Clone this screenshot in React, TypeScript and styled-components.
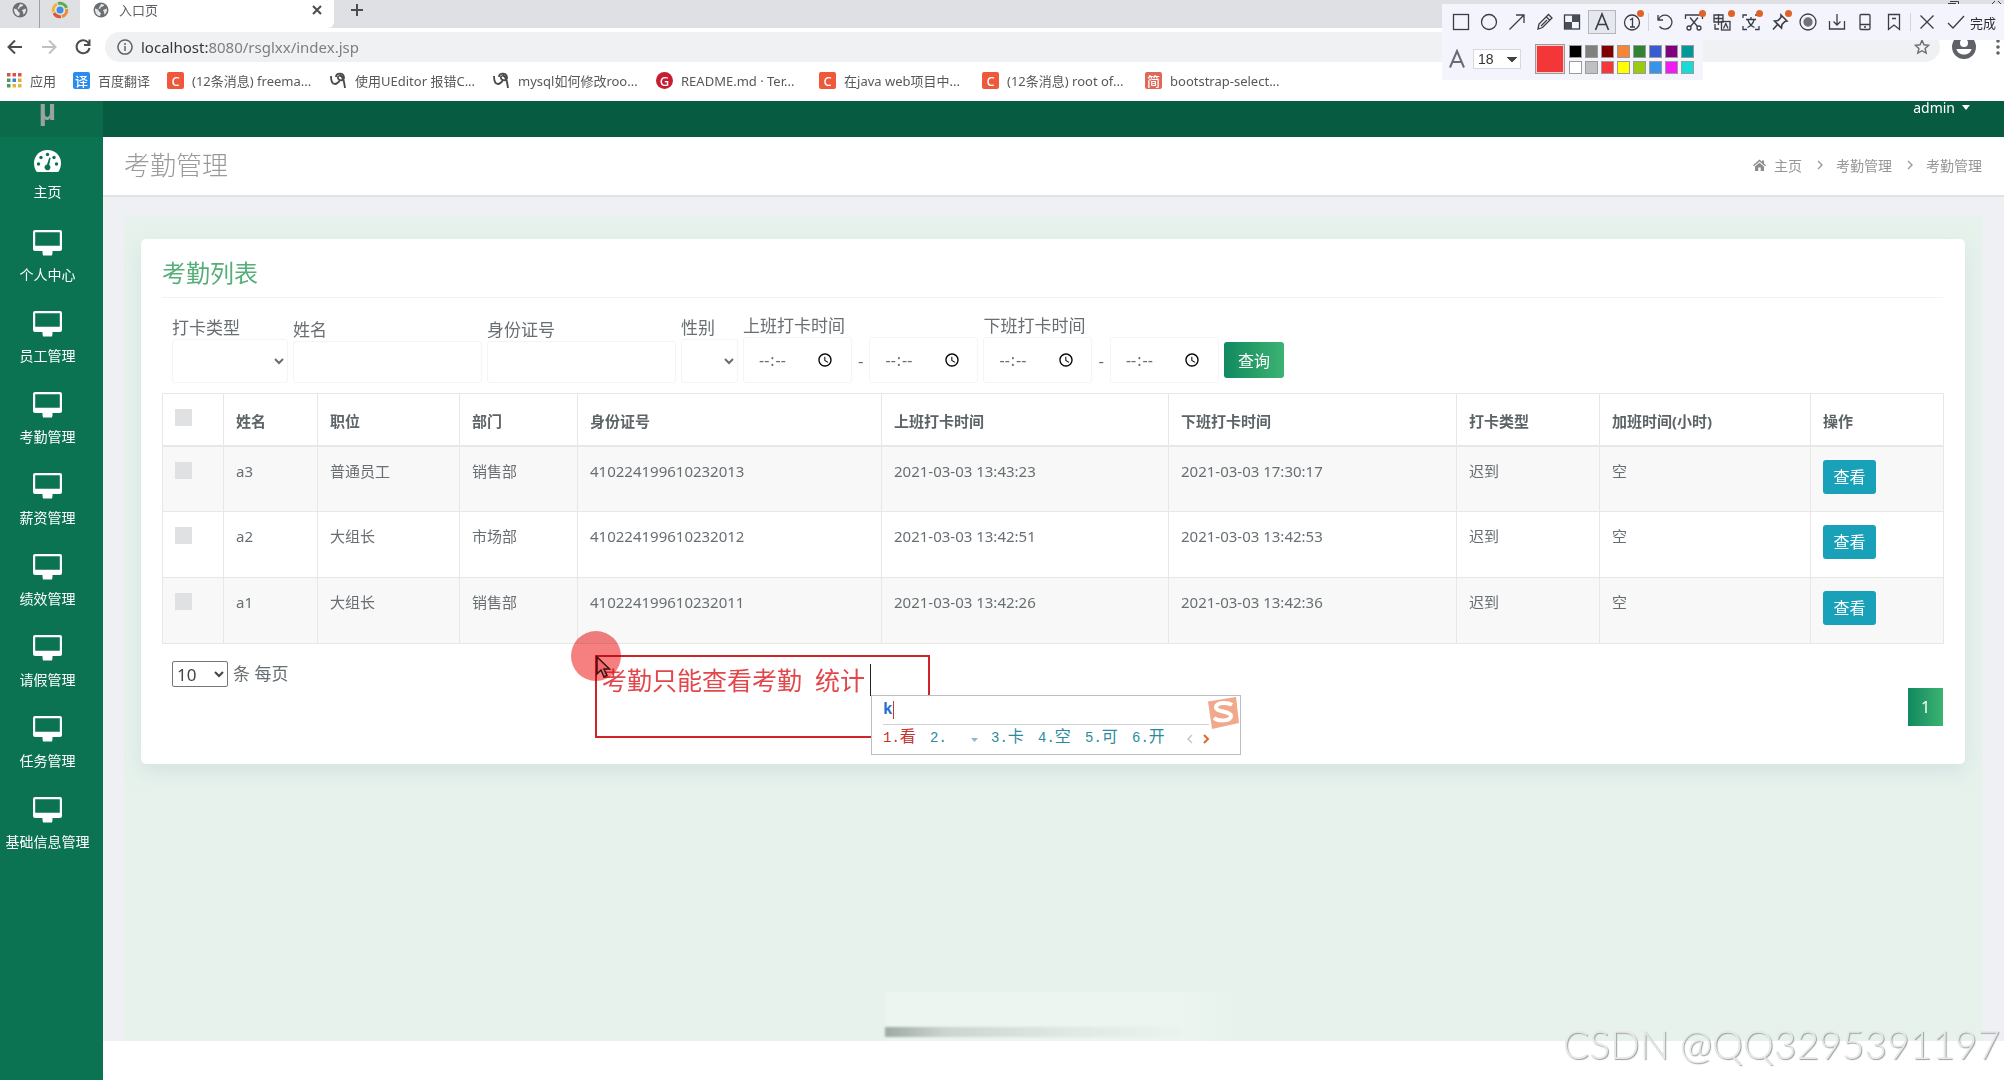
import React from "react";
import styled, { createGlobalStyle, css } from "styled-components";

const GlobalStyle = createGlobalStyle`
  *, *::before, *::after { box-sizing: border-box; }
  body {
    margin: 0;
    background: #fff;
    color: #686f73;
    font-family: "Noto Sans", "Noto Sans CJK SC", sans-serif;
    font-size: 15px;
  }
  button, input, select { font: inherit; color: inherit; }
  a { color: inherit; text-decoration: none; }
`;

const Screen = styled.div`
  position: relative;
  min-height: 100vh;
  display: flex;
  flex-direction: column;
  overflow: hidden;
`;

/* ---------- browser chrome ---------- */

const TabStrip = styled.div`
  display: flex;
  align-items: stretch;
  height: 28px;
  background: #dee0e4;
`;

const PinnedTab = styled.div`
  display: flex;
  align-items: center;
  justify-content: center;
  width: 40px;
  padding-bottom: 8px;
  &:first-child { border-right: 1px solid #9da0a4; }
`;

const ActiveTab = styled.div`
  display: flex;
  align-items: center;
  gap: 10px;
  width: 254px;
  padding: 0 11px 8px 13px;
  background: #fff;
  border-radius: 0 0 6px 0;
  color: #5b5e62;
  font-size: 13px;
  line-height: 20px;
`;

const TabTitle = styled.span`
  flex: 1;
`;

const PlainButton = styled.button`
  display: flex;
  align-items: center;
  justify-content: center;
  padding: 0;
  border: 0;
  background: none;
`;

const NewTabButton = styled(PlainButton)`
  width: 46px;
  padding-bottom: 8px;
`;

const WindowControls = styled.div`
  display: flex;
  gap: 32px;
  margin-left: auto;
  padding-right: 2px;
`;

const AddressRow = styled.div`
  display: flex;
  align-items: center;
  height: 38px;
  padding-bottom: 1px;
  background: #fff;
`;

const NavButtons = styled.div`
  display: flex;
  gap: 14px;
  padding: 0 12px 0 5px;
`;

const NavButton = styled(PlainButton)`
  width: 20px;
  height: 20px;
`;

const UrlPill = styled.div`
  flex: 1;
  display: flex;
  align-items: center;
  gap: 8px;
  height: 30px;
  padding: 0 10px 0 12px;
  border-radius: 15px;
  background: #eff1f3;
  color: #7b7f83;
  font-size: 15px;
`;

const UrlText = styled.span`
  flex: 1;
  b { font-weight: 400; color: #35383b; }
`;

const BrowserMenu = styled.div`
  display: flex;
  align-items: center;
  gap: 20px;
  width: 64px;
  padding-left: 12px;
`;

const BookmarkBar = styled.nav`
  display: flex;
  align-items: center;
  gap: 17px;
  height: 35px;
  padding: 0 7px 6px;
  background: #fff;
  color: #55585c;
  font-size: 13px;
`;

const BookmarkLink = styled.a<{ $wide?: boolean }>`
  display: flex;
  align-items: center;
  gap: 8px;
  line-height: 18px;
  white-space: nowrap;
  ${(p) => p.$wide && css`width: 146px;`}
`;

const BookmarkBadge = styled.span<{ $bg: string; $round?: boolean }>`
  flex: none;
  display: flex;
  align-items: center;
  justify-content: center;
  width: 17px;
  height: 17px;
  border-radius: ${(p) => (p.$round ? "50%" : "2px")};
  background: ${(p) => p.$bg};
  color: #fff;
  font-size: 13px;
  font-weight: 500;
`;

/* ---------- application shell ---------- */

const AppShell = styled.div`
  flex: 1;
  display: flex;
`;

const Sidebar = styled.aside`
  flex: none;
  width: 103px;
  padding-right: 8px;
  background: #0c7352;
`;

const Brand = styled.div`
  height: 36px;
  margin-right: -8px;
  padding-right: 8px;
  background: #0a6a4a;
  color: #9aa39d;
  font-family: "Liberation Sans", sans-serif;
  font-size: 30px;
  font-weight: 700;
  line-height: 18px;
  text-align: center;
`;

const Menu = styled.ul`
  margin: 0;
  padding: 0;
  list-style: none;
`;

const MenuItem = styled.li`
  height: 81px;
`;

const MenuLink = styled.a`
  display: flex;
  flex-direction: column;
  align-items: center;
  gap: 9px;
  padding-top: 12px;
  color: #fff;
  font-size: 14px;
  line-height: 20px;
  white-space: nowrap;
  svg { display: block; }
`;

const Content = styled.div`
  flex: 1;
  display: flex;
  flex-direction: column;
  min-width: 0;
`;

const TopBar = styled.header`
  display: flex;
  justify-content: flex-end;
  height: 36px;
  padding: 0 34px;
  background: #075b41;
`;

const UserMenu = styled(PlainButton)`
  gap: 7px;
  height: 13px;
  color: #fff;
  font-size: 14px;
`;

const TitleBar = styled.div`
  display: flex;
  align-items: center;
  justify-content: space-between;
  height: 58px;
  padding: 0 22px 2px 21px;
  background: #fff;
`;

const PageTitle = styled.h1`
  margin: 0;
  color: #9a9a9a;
  font-size: 26px;
  font-weight: 300;
  line-height: 36px;
`;

const Breadcrumb = styled.nav`
  display: flex;
  align-items: center;
  gap: 12px;
  color: #969696;
  font-size: 14px;
  a { display: flex; align-items: center; gap: 8px; }
`;

const Main = styled.main`
  flex: 1;
  display: flex;
  flex-direction: column;
  padding: 19px 22px 0 21px;
  border-top: 2px solid #e1e2e4;
  background: #eff0f3;
`;

const Panel = styled.section`
  flex: 1;
  padding: 23px 17px;
  background: #e7f2ec;
`;

const Footer = styled.footer`
  height: 39px;
  background: #fff;
`;

const Card = styled.div`
  padding: 20px 22px 38px 21px;
  border-radius: 5px;
  background: #fff;
  box-shadow: 0 8px 20px rgba(160, 190, 200, 0.28);
`;

const CardTitle = styled.h2`
  margin: 0 0 17px;
  padding-bottom: 10px;
  border-bottom: 1px solid #f3f3f3;
  color: #56ae79;
  font-size: 24px;
  font-weight: 400;
  line-height: 28px;
`;

/* ---------- filters ---------- */

const FilterForm = styled.form`
  display: flex;
  align-items: flex-end;
  gap: 5px;
  padding-left: 10px;
`;

const Field = styled.div`
  display: flex;
  flex-direction: column;
  font-size: 17px;
  label { line-height: 22px; }
`;

const control = css`
  border: 1px solid #f3f4f4;
  border-radius: 3px;
  background: #fff;
`;

const FilterSelect = styled.select<{ $width: number }>`
  ${control}
  width: ${(p) => p.$width}px;
  height: 44px;
`;

const FilterInput = styled.input`
  ${control}
  width: 189px;
  height: 42px;
`;

const TimeRange = styled.div`
  display: flex;
  align-items: center;
  gap: 6px;
`;

const TimeInput = styled.input`
  ${control}
  width: 109px;
  height: 46px;
  padding: 0 14px;
  font-size: 16px;
  &::-webkit-datetime-edit-ampm-field { display: none; }
`;

const QueryButton = styled.button`
  width: 60px;
  height: 36px;
  margin-bottom: 5px;
  padding: 0;
  border: 0;
  border-radius: 3px;
  background: linear-gradient(90deg, #12895f, #3cb371);
  color: #fff;
  font-size: 16px;
`;

/* ---------- table ---------- */

const Table = styled.table`
  width: 100%;
  margin-top: 10px;
  border-collapse: collapse;
  table-layout: fixed;
  line-height: 24px;

  th, td {
    border: 1px solid #e6e8e8;
    padding: 12px;
    text-align: left;
    vertical-align: top;
  }
  th {
    height: 52px;
    padding: 15px 12px 11px;
    border-bottom-width: 2px;
    color: #5c6468;
    font-weight: 700;
  }
  td { height: 66px; }
  tbody tr:nth-child(odd) { background: #f8f8f8; }
`;

const Column = styled.col<{ $width: number }>`
  width: ${(p) => p.$width}px;
`;

const CheckCell = styled.td`
  && { padding-top: 15px; }
`;

const ActionCell = styled.td`
  && { padding-top: 13px; }
`;

const Tick = styled.input`
  appearance: none;
  display: block;
  width: 17px;
  height: 17px;
  margin: 0;
  background: #dfe1e3;
`;

const ViewButton = styled.button`
  display: block;
  width: 53px;
  height: 34px;
  padding: 0;
  border: 0;
  border-radius: 3px;
  background: #18a1b8;
  color: #fff;
  font-size: 16px;
`;

const TableFooter = styled.div`
  display: flex;
  justify-content: space-between;
  height: 65px;
  margin-top: 17px;
  padding-left: 10px;
`;

const PageSize = styled.label`
  display: flex;
  gap: 5px;
  font-size: 17px;
  line-height: 26px;
  select {
    width: 56px;
    height: 26px;
    border: 1px solid #767676;
    border-radius: 2px;
    background: #fff;
    color: #444;
  }
`;

const PageButton = styled.button`
  align-self: flex-end;
  width: 35px;
  height: 38px;
  padding: 0;
  border: 0;
  background: linear-gradient(90deg, #12895f, #3cb371);
  color: #fff;
  font-size: 16px;
`;

/* ---------- screen-capture toolbar ---------- */

const CaptureTool = styled.div`
  position: absolute;
  top: 4px;
  right: 0;
  width: 562px;
`;

const CaptureRow = styled.div`
  display: flex;
  align-items: center;
  height: 36px;
  padding-left: 5px;
  background: #f4f5fc;
`;

const ToolGroup = styled.div<{ $width: number }>`
  flex: none;
  display: flex;
  width: ${(p) => p.$width}px;
`;

const ToolButton = styled(PlainButton)<{ $active?: boolean }>`
  position: relative;
  flex: 1;
  height: 24px;
  ${(p) =>
    p.$active &&
    css`
      margin: 0 2px;
      background: #e6e8f0;
      box-shadow: inset 0 0 0 1px #b4b6bc;
    `}
`;

const NewDot = styled.i`
  position: absolute;
  top: 0;
  right: 2px;
  width: 7px;
  height: 7px;
  border-radius: 50%;
  background: #e0622a;
`;

const ToolDivider = styled.i`
  flex: none;
  width: 1px;
  height: 18px;
  margin: 0 2px;
  background: #d3d5dc;
`;

const DoneButton = styled(PlainButton)`
  gap: 5px;
  margin-left: 6px;
  color: #2c2d33;
  font-size: 13px;
  white-space: nowrap;
`;

const StyleRow = styled.div`
  display: flex;
  align-items: center;
  width: 261px;
  height: 40px;
  padding: 0 0 2px 5px;
  background: #f4f5fc;
  font-family: "Liberation Sans", sans-serif;
  color: #333;
`;

const SizeSelect = styled.select`
  appearance: none;
  width: 48px;
  height: 20px;
  margin: 0 14px 0 6px;
  padding: 0 4px;
  border: 1px solid #d7d9df;
  border-radius: 0;
  background:
    linear-gradient(to bottom left, #444 50%, transparent 50%) 33px 7px / 5px 6px no-repeat,
    linear-gradient(to bottom right, #444 50%, transparent 50%) 38px 7px / 5px 6px no-repeat,
    #fff;
  font-size: 14px;
`;

const CurrentColor = styled.span`
  width: 30px;
  height: 30px;
  margin-right: 4px;
  border: 1px solid #9b9b9b;
  background: #f33638;
  box-shadow: inset 0 0 0 1px #f4cfd0;
`;

const Palette = styled.div`
  display: grid;
  grid-template-columns: repeat(8, 13px);
  gap: 3px;
`;

const Swatch = styled.button<{ $color: string }>`
  height: 13px;
  padding: 0;
  border: 1px solid #9b9b9b;
  background: ${(p) => p.$color};
`;

/* ---------- annotation and input method ---------- */

const Annotation = styled.div`
  position: absolute;
  top: 655px;
  left: 595px;
  width: 335px;
  height: 83px;
  padding: 7px 5px;
  border: 2px solid #cf2429;
  color: #e2474b;
  font-size: 25px;
  line-height: 32px;
  white-space: pre;
`;

const AnnotationText = styled.span`
  display: inline-block;
  padding-right: 5px;
  border-right: 1px solid #222;
`;

const ClickHalo = styled.div`
  position: absolute;
  top: 631px;
  left: 571px;
  width: 50px;
  height: 50px;
  border-radius: 50%;
  background: #f67f80;
  mix-blend-mode: multiply;
`;

const Pointer = styled.svg`
  position: absolute;
  top: 656px;
  left: 596px;
`;

const ImeWindow = styled.div`
  position: absolute;
  top: 695px;
  left: 871px;
  width: 370px;
  height: 60px;
  padding-left: 11px;
  border: 1px solid #bcbfc2;
  background: #fff;
  color: #2c8a9f;
  font-family: "Liberation Mono", "Noto Sans CJK SC", monospace;
  font-size: 14px;
`;

const Composition = styled.div`
  width: 326px;
  height: 29px;
  border-bottom: 1px solid #cfd2d5;
  line-height: 29px;
  b { color: #1f6fd0; font-size: 16px; border-right: 1px solid #c33; }
`;

const Candidates = styled.ol`
  display: flex;
  align-items: baseline;
  height: 28px;
  margin: 0;
  padding: 0;
  list-style: none;
  line-height: 26px;
`;

const Candidate = styled.li<{ $first?: boolean }>`
  width: 47px;
  white-space: nowrap;
  ${(p) => p.$first && css`color: #c8302c;`}
  span { font-size: 16px; }
`;

const WideCandidate = styled(Candidate)`
  width: 61px;
  svg { margin-left: 24px; }
`;

const Arrows = styled.li`
  display: flex;
  gap: 6px;
  align-self: center;
  padding-left: 7px;
`;

const ImeLogo = styled.svg`
  position: absolute;
  top: 0;
  right: 0;
`;

const Watermark = styled.div`
  position: absolute;
  right: 4px;
  bottom: 10px;
  color: #e6e9e8;
  font-family: Lato, "Liberation Sans", sans-serif;
  font-size: 39px;
  font-weight: 300;
  line-height: 52px;
  text-shadow: 1px 1px 1px #9a9f9d;
  white-space: nowrap;
`;

const PlayerShade = styled.div`
  position: absolute;
  left: 885px;
  bottom: 4px;
  width: 370px;
  height: 84px;
  padding-top: 35px;
  background: linear-gradient(90deg, rgba(255, 255, 255, 0.2) 80%, transparent);
  &::before {
    content: "";
    display: block;
    width: 300px;
    height: 10px;
    background: linear-gradient(90deg, #9eaaa3, #ccd5cf 20%, #dfe8e2 60%, transparent);
    filter: blur(1px);
  }
`;

/* ---------- drawings ---------- */

const Globe = () => (
  <svg width="16" height="16" viewBox="0 0 16 16">
    <circle cx="8" cy="8" r="7.500" fill="#6b6f74" />
    <path d="M2 6.500l3 1 1.500 2.500 1.500 1-1 3C3.500 13.500 1.800 10.500 2 6.500zM8 2l3.500.8L10 4.500 8 5 7 7 5.500 6.500 7 4zM10 8l3.800-1.500c.6 2.500-.6 5-2.300 6.200L11 10z" fill="#e4e6e8" />
  </svg>
);

const Swirl = () => (
  <svg width="18" height="18" viewBox="0 0 18 18" fill="none" strokeWidth="3">
    <path d="M2.500 11A6.800 6.800 0 0 1 6 3" stroke="#f2b233" />
    <path d="M7 2.500A6.800 6.800 0 0 1 15.500 7" stroke="#5cae4c" />
    <path d="M15.700 8A6.800 6.800 0 0 1 11 15.500" stroke="#f08a35" />
    <path d="M10 15.700A6.800 6.800 0 0 1 3 12" stroke="#e2553a" />
    <circle cx="9" cy="9" r="3.500" fill="#3d8fe0" />
  </svg>
);

const Stroke = ({ d, color = "#4a4d51", size = 18, width = 2, box = 18 }: { d: string; color?: string; size?: number; width?: number; box?: number }) => (
  <svg width={size} height={size} viewBox={`0 0 ${box} ${box}`} fill="none" stroke={color} strokeWidth={width}>
    <path d={d} />
  </svg>
);

const AppsGrid = () => (
  <svg width="15" height="15" viewBox="0 0 15 15">
    {["#d9534a", "#d9534a", "#d9534a", "#4a9e5c", "#3f7fd6", "#e0a93a", "#4a9e5c", "#e0b93a", "#e0b93a"].map((c, i) => (
      <rect key={i} x={(i % 3) * 5.5} y={Math.floor(i / 3) * 5.5} width="3.500" height="3.500" fill={c} />
    ))}
  </svg>
);

const Quill = () => (
  <svg width="17" height="17" viewBox="0 0 17 17" fill="none" stroke="#4b4b4b" strokeWidth="1.800">
    <path d="M1 4c0 5 1.500 8 4 8 2 0 3.500-1.500 5-4M6 5c0-4 6-4.500 7.500-1.500S13 9 10 8 7 4.500 10 3.500c3 .5 4 5 5 12.500" />
  </svg>
);

const Gauge = () => (
  <svg width="29" height="24" viewBox="0 0 29 24">
    <path d="M14.500 1C6.800 1 1 6.800 1 14c0 3 .8 5.600 2.200 8.200.3.500.7.800 1.300.8h20c.6 0 1-.3 1.300-.8C27.200 19.600 28 17 28 14 28 6.800 22.200 1 14.500 1z" fill="#fff" />
    <g fill="#0c7352">
      <circle cx="5.500" cy="15" r="1.700" />
      <circle cx="8" cy="8.500" r="1.700" />
      <circle cx="14.500" cy="5.500" r="1.700" />
      <circle cx="21" cy="8.500" r="1.700" />
      <circle cx="23.500" cy="15" r="1.700" />
      <path d="M16.300 8.500l1.300.4-1.400 7a3 3 0 1 1-2.200-.5z" />
    </g>
  </svg>
);

const Monitor = () => (
  <svg width="29" height="26" viewBox="0 0 29 26">
    <path fillRule="evenodd" fill="#fff" d="M2 0h25a2 2 0 0 1 2 2v17a2 2 0 0 1-2 2h-7.500v2l-.5 2.500h-9L9.500 23v-2H2a2 2 0 0 1-2-2V2a2 2 0 0 1 2-2zM2.200 2.200v13.600h24.600V2.200z" />
  </svg>
);

const HomeIcon = () => (
  <svg width="13" height="12" viewBox="0 0 13 12" fill="#8c8c8c">
    <path d="M6.500.5L0 6.200l.9 1L6.500 2.500l5.600 4.700.9-1-2-1.800V1.500H9v1.200zM6.500 3.700L2 7.500V12h3.300V8.500h2.400V12H11V7.500z" />
  </svg>
);

const captureStroke = { fill: "none", stroke: "#3b3d46", strokeWidth: 1.3 };
const ToolIcon = ({ children }: { children: React.ReactNode }) => (
  <svg width="20" height="20" viewBox="0 0 20 20" {...captureStroke}>{children}</svg>
);

const drawTools: { name: string; art: React.ReactNode; dot?: boolean; active?: boolean }[] = [
  { name: "矩形", art: <rect x="2.500" y="2.500" width="15" height="15" /> },
  { name: "椭圆", art: <circle cx="10" cy="10" r="7.500" /> },
  { name: "箭头", art: <path d="M2.500 17.500L17 3M9 3h8v8" /> },
  { name: "画笔", art: <path d="M3 17l1-5L13.500 2.500l3.500 3.500L7.500 15.500zM11.500 5l3.500 3.500M6 14l6-6" /> },
  { name: "马赛克", art: <><rect x="2.500" y="3" width="15" height="14" /><path d="M10 3h7v7h-7zM3 10h7v7H3z" fill="#4a4c57" stroke="none" /></> },
  { name: "文字", art: <path d="M3.500 18L10 2l6.500 16M6 12.500h8" strokeWidth="1.600" />, active: true },
  { name: "序号", art: <><circle cx="10" cy="10.500" r="7.500" /><path d="M8 8l2.500-1.500V15M8 15h5" /></>, dot: true },
];

const editTools: { name: string; art: React.ReactNode; dot?: boolean }[] = [
  { name: "撤销", art: <path d="M3 3v5h5M3.500 7.500a7 7 0 1 1 1 7" /> },
  { name: "剪裁", art: <><path d="M1.500 7V3h17v4M6 5.500l7.500 9M14 5.500L6.500 14.500" /><circle cx="5" cy="16" r="2" /><circle cx="15" cy="16" r="2" /></>, dot: true },
  { name: "翻译", art: <><path d="M2 3h9v7H2zM6.500 2v11M2 6.500h9M3 12v5h4" /><rect x="9.500" y="9.500" width="8.500" height="8.500" /><path d="M11.500 16.500l2.300-5 2.200 5" /></>, dot: true },
  { name: "识别文字", art: <path d="M2 6V3h4M14 3h4M2 14v3.500h4M14 17.500h4V14M5 7.500h10M10 5v2.500M13 8c-1 3.500-3 6-6.500 7.500M7 8c1 3.500 3 6 6.500 7.500" />, dot: true },
  { name: "钉住", art: <path d="M11 3l6 6-2 .5-3 3-.5 3.500-7-7 3.500-.5 3-3zM8 12l-5 5.500" strokeWidth="1.600" />, dot: true },
  { name: "录屏", art: <><circle cx="10" cy="10" r="8" /><circle cx="10" cy="10" r="4" fill="#70727c" stroke="#70727c" /></> },
  { name: "保存", art: <path d="M2.500 9v8h15V9M10 2v11M6.500 9.500L10 13l3.500-3.500" /> },
  { name: "发送到手机", art: <><rect x="5" y="2.500" width="10" height="15" rx="1" /><path d="M5 12.500h10M9 15h2" /></> },
  { name: "收藏", art: <path d="M4.500 2.500h11v15L10 13l-5.500 4.500zM8 6.500h4" /> },
];

const palette = [
  "#000000", "#808080", "#800000", "#f78536", "#2f8432", "#385ad3", "#800080", "#009999",
  "#ffffff", "#c0c0c0", "#f83639", "#ffff00", "#99cc10", "#3893ea", "#f31bf4", "#16dcd5",
];

/* ---------- data ---------- */

const bookmarks = [
  { icon: <BookmarkBadge $bg="#f0583c">C</BookmarkBadge>, text: "(12条消息) freema..." },
  { icon: <Quill />, text: "使用UEditor 报错C..." },
  { icon: <Quill />, text: "mysql如何修改roo..." },
  { icon: <BookmarkBadge $bg="#c71d33" $round>G</BookmarkBadge>, text: "README.md · Ter..." },
  { icon: <BookmarkBadge $bg="#f0583c">C</BookmarkBadge>, text: "在java web项目中..." },
  { icon: <BookmarkBadge $bg="#f0583c">C</BookmarkBadge>, text: "(12条消息) root of..." },
  { icon: <BookmarkBadge $bg="#e0685a">简</BookmarkBadge>, text: "bootstrap-select..." },
];

const menu = ["主页", "个人中心", "员工管理", "考勤管理", "薪资管理", "绩效管理", "请假管理", "任务管理", "基础信息管理"];

const columns = [
  { title: "姓名", width: 94 },
  { title: "职位", width: 142 },
  { title: "部门", width: 118 },
  { title: "身份证号", width: 304 },
  { title: "上班打卡时间", width: 287 },
  { title: "下班打卡时间", width: 288 },
  { title: "打卡类型", width: 143 },
  { title: "加班时间(小时)", width: 211 },
  { title: "操作", width: 133 },
];

const rows = [
  ["a3", "普通员工", "销售部", "410224199610232013", "2021-03-03 13:43:23", "2021-03-03 17:30:17", "迟到", "空"],
  ["a2", "大组长", "市场部", "410224199610232012", "2021-03-03 13:42:51", "2021-03-03 13:42:53", "迟到", "空"],
  ["a1", "大组长", "销售部", "410224199610232011", "2021-03-03 13:42:26", "2021-03-03 13:42:36", "迟到", "空"],
];

const TimeFilter = ({ id, label }: { id: string; label: string }) => (
  <Field>
    <label htmlFor={id}>{label}</label>
    <TimeRange>
      <TimeInput id={id} type="time" />-
      <TimeInput type="time" aria-label={label} />
    </TimeRange>
  </Field>
);

export default function App() {
  return (
    <Screen>
      <GlobalStyle />

      <TabStrip>
        <PinnedTab><Globe /></PinnedTab>
        <PinnedTab><Swirl /></PinnedTab>
        <ActiveTab>
          <Globe />
          <TabTitle>入口页</TabTitle>
          <PlainButton aria-label="关闭标签页"><Stroke d="M2 2l8 8M10 2l-8 8" size={12} box={12} /></PlainButton>
        </ActiveTab>
        <NewTabButton aria-label="新标签页"><Stroke d="M7 1v12M1 7h12" size={14} box={14} /></NewTabButton>
        <WindowControls>
          <svg width="12" height="4" viewBox="0 0 12 4" fill="none" stroke="#3b3d40"><path d="M3 1.500h8.500V4M1 3.500h8" /></svg>
          <svg width="11" height="4" viewBox="0 0 11 4" fill="none" stroke="#3b3d40"><path d="M1 4l3-3M10 4L7 1" /></svg>
        </WindowControls>
      </TabStrip>

      <AddressRow>
        <NavButtons>
          <NavButton aria-label="后退"><Stroke d="M16 9H3M9 2.500L2.500 9 9 15.500" /></NavButton>
          <NavButton aria-label="前进"><Stroke d="M2 9h13M9 2.500L15.500 9 9 15.500" color="#bfc1c4" /></NavButton>
          <NavButton aria-label="刷新"><Stroke d="M15 6A6.500 6.500 0 1 0 15.500 10M15.500 1.500V7H10" /></NavButton>
        </NavButtons>
        <UrlPill>
          <Stroke d="M8 1a7 7 0 1 0 .01 0zM8 7v5M8 4v2" color="#5f6368" size={16} box={16} width={1.5} />
          <UrlText><b>localhost:</b>8080/rsglxx/index.jsp</UrlText>
          <Stroke d="M9 1.500l2.200 5 5.300.5-4 3.600 1.200 5.300L9 13.200l-4.700 2.700 1.200-5.300-4-3.600 5.300-.5z" color="#6a6d71" size={16} width={1.6} />
        </UrlPill>
        <BrowserMenu>
          <svg width="24" height="24" viewBox="0 0 24 24">
            <circle cx="12" cy="12" r="12" fill="#5f6368" />
            <circle cx="12" cy="8" r="4" fill="#fff" />
            <path d="M4.500 14h15c-1 4-4 5.500-7.500 5.500S5.500 18 4.500 14z" fill="#fff" />
          </svg>
          <svg width="4" height="16" viewBox="0 0 4 16" fill="#5f6368">
            <circle cx="2" cy="2" r="1.800" /><circle cx="2" cy="8" r="1.800" /><circle cx="2" cy="14" r="1.800" />
          </svg>
        </BrowserMenu>
      </AddressRow>

      <BookmarkBar>
        <BookmarkLink href="#apps"><AppsGrid />应用</BookmarkLink>
        <BookmarkLink href="#fanyi"><BookmarkBadge $bg="#2a8cf0">译</BookmarkBadge>百度翻译</BookmarkLink>
        {bookmarks.map((b) => (
          <BookmarkLink key={b.text} href="#bookmark" $wide>{b.icon}{b.text}</BookmarkLink>
        ))}
      </BookmarkBar>

      <AppShell>
        <Sidebar>
          <Brand>µ</Brand>
          <Menu>
            {menu.map((name, i) => (
              <MenuItem key={name}>
                <MenuLink href="#menu">{i === 0 ? <Gauge /> : <Monitor />}{name}</MenuLink>
              </MenuItem>
            ))}
          </Menu>
        </Sidebar>

        <Content>
          <TopBar>
            <UserMenu>
              admin
              <svg width="8" height="5" viewBox="0 0 8 5" fill="#fff"><path d="M0 0h8L4 5z" /></svg>
            </UserMenu>
          </TopBar>
          <TitleBar>
            <PageTitle>考勤管理</PageTitle>
            <Breadcrumb>
              <a href="#home"><HomeIcon />主页</a>
              <Stroke d="M4 1l4 4-4 4" size={10} box={10} color="#9a9a9a" width={1.4} />
              <a href="#attendance">考勤管理</a>
              <Stroke d="M4 1l4 4-4 4" size={10} box={10} color="#9a9a9a" width={1.4} />
              <span>考勤管理</span>
            </Breadcrumb>
          </TitleBar>

          <Main>
            <Panel>
              <Card>
                <CardTitle>考勤列表</CardTitle>
                <FilterForm>
                  <Field>
                    <label htmlFor="type">打卡类型</label>
                    <FilterSelect id="type" $width={116} />
                  </Field>
                  <Field>
                    <label htmlFor="name">姓名</label>
                    <FilterInput id="name" />
                  </Field>
                  <Field>
                    <label htmlFor="idcard">身份证号</label>
                    <FilterInput id="idcard" />
                  </Field>
                  <Field>
                    <label htmlFor="sex">性别</label>
                    <FilterSelect id="sex" $width={57} />
                  </Field>
                  <TimeFilter id="start" label="上班打卡时间" />
                  <TimeFilter id="end" label="下班打卡时间" />
                  <QueryButton type="button">查询</QueryButton>
                </FilterForm>

                <Table>
                  <colgroup>
                    <Column $width={61} />
                    {columns.map((c) => <Column key={c.title} $width={c.width} />)}
                  </colgroup>
                  <thead>
                    <tr>
                      <th><Tick type="checkbox" aria-label="全选" /></th>
                      {columns.map((c) => <th key={c.title}>{c.title}</th>)}
                    </tr>
                  </thead>
                  <tbody>
                    {rows.map((row) => (
                      <tr key={row[0]}>
                        <CheckCell><Tick type="checkbox" aria-label={row[0]} /></CheckCell>
                        {row.map((cell, i) => <td key={i}>{cell}</td>)}
                        <ActionCell><ViewButton>查看</ViewButton></ActionCell>
                      </tr>
                    ))}
                  </tbody>
                </Table>

                <TableFooter>
                  <PageSize>
                    <select defaultValue="10"><option>10</option></select>
                    条 每页
                  </PageSize>
                  <PageButton>1</PageButton>
                </TableFooter>
              </Card>
            </Panel>
          </Main>
          <Footer />
        </Content>
      </AppShell>

      <PlayerShade />

      <CaptureTool>
        <CaptureRow>
          <ToolGroup $width={199}>
            {drawTools.map((t) => (
              <ToolButton key={t.name} aria-label={t.name} $active={t.active}>
                <ToolIcon>{t.art}</ToolIcon>{t.dot && <NewDot />}
              </ToolButton>
            ))}
          </ToolGroup>
          <ToolDivider />
          <ToolGroup $width={257}>
            {editTools.map((t) => (
              <ToolButton key={t.name} aria-label={t.name}>
                <ToolIcon>{t.art}</ToolIcon>{t.dot && <NewDot />}
              </ToolButton>
            ))}
          </ToolGroup>
          <ToolDivider />
          <ToolGroup $width={28}>
            <ToolButton aria-label="取消"><ToolIcon><path d="M3.500 3.500l13 13M16.500 3.500l-13 13" /></ToolIcon></ToolButton>
          </ToolGroup>
          <DoneButton>
            <svg width="18" height="16" viewBox="0 0 18 16" {...captureStroke}><path d="M1 9l5 5L17 2" /></svg>
            完成
          </DoneButton>
        </CaptureRow>
        <StyleRow>
          <svg width="20" height="20" viewBox="0 0 20 20" fill="none" stroke="#6a6c73" strokeWidth="2"><path d="M3 18.500L10 2l7 16.500M5.500 13h9" /></svg>
          <SizeSelect aria-label="字号" defaultValue="18"><option>18</option></SizeSelect>
          <CurrentColor />
          <Palette>
            {palette.map((c) => <Swatch key={c} $color={c} aria-label={c} />)}
          </Palette>
        </StyleRow>
      </CaptureTool>

      <Annotation><AnnotationText>考勤只能查看考勤  统计</AnnotationText></Annotation>
      <ClickHalo />
      <Pointer width="16" height="24" viewBox="0 0 16 24" fill="#f2696b" stroke="#3a1114" strokeWidth="1.500">
        <path d="M1 1v17l4-4 3 7 3-1.500-3-6.500h5.500z" />
      </Pointer>

      <ImeWindow>
        <Composition><b>k</b></Composition>
        <Candidates>
          <Candidate $first>1.<span>看</span></Candidate>
          <WideCandidate>2.<svg width="7" height="4" viewBox="0 0 7 4" fill="#8fb9cc"><path d="M0 0h7L3.500 4z" /></svg></WideCandidate>
          <Candidate>3.<span>卡</span></Candidate>
          <Candidate>4.<span>空</span></Candidate>
          <Candidate>5.<span>可</span></Candidate>
          <Candidate>6.<span>开</span></Candidate>
          <Arrows>
            <Stroke d="M6 1L2 5l4 4" size={10} box={10} color="#c4c7ca" width={1.5} />
            <Stroke d="M2 1l4 4-4 4" size={10} box={10} color="#e2652c" width={2} />
          </Arrows>
        </Candidates>
        <ImeLogo width="34" height="34" viewBox="0 0 34 34">
          <path d="M2 5.500L30 1l3 26-27 6z" fill="#f0a98c" />
          <path d="M26 9c-4-3-15-3-16 2s15 4 15 9-12 6-17 2" fill="none" stroke="#fff" strokeWidth="4" />
        </ImeLogo>
      </ImeWindow>

      <Watermark>CSDN @QQ3295391197</Watermark>
    </Screen>
  );
}
